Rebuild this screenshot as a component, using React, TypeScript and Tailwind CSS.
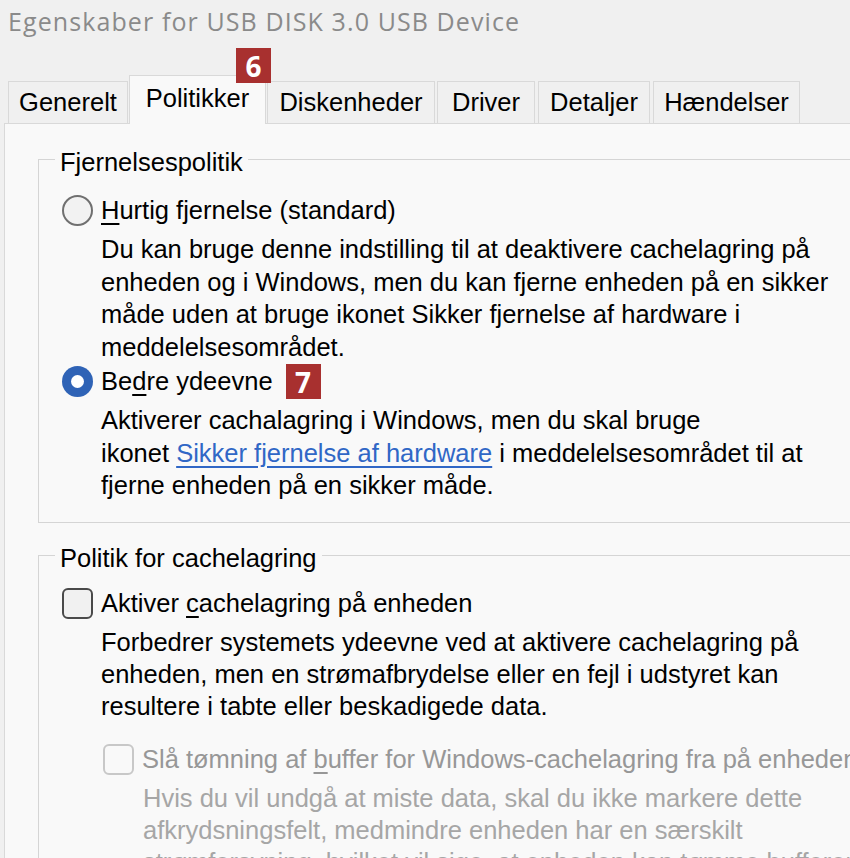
import React from "react";

const BORDER = "border-[#d5d5d5]";

function GroupHeader({ title }: { title: string }) {
  return (
    <div className="flex h-[30px]">
      <div className="w-[17px] flex flex-col shrink-0">
        <div className="h-[15px]" />
        <div className={`flex-1 border-l border-t ${BORDER}`} />
      </div>
      <div className="px-[5px] pt-[3px] leading-[30px] whitespace-nowrap">{title}</div>
      <div className="flex-1 flex flex-col">
        <div className="h-[15px]" />
        <div className={`flex-1 border-t border-r ${BORDER}`} />
      </div>
    </div>
  );
}

function Radio({ checked }: { checked?: boolean }) {
  if (checked) {
    return (
      <div className="w-[31px] h-[31px] rounded-full bg-[#2f63b6] flex items-center justify-center shrink-0">
        <div className="w-[13px] h-[13px] rounded-full bg-white" />
      </div>
    );
  }
  return <div className="w-[31px] h-[31px] rounded-full border-[2px] border-[#707070] bg-[#f2f2f2] shrink-0" />;
}

function Tab({ label, w, ml, selected }: { label: string; w: string; ml: string; selected?: boolean }) {
  if (selected) {
    return (
      <div
        className={`${w} ${ml} h-[49px] -mb-px relative z-10 bg-[#f9f9f9] border border-b-0 border-[#d9d9d9] flex justify-center pt-[6px] leading-[33px] shrink-0`}
      >
        {label}
      </div>
    );
  }
  return (
    <div
      className={`${w} ${ml} h-[42px] bg-[#f0f0f0] border border-b-0 border-[#d9d9d9] flex items-center justify-center leading-[33px] shrink-0`}
    >
      {label}
    </div>
  );
}

export default function App() {
  return (
    <div
      className="relative w-[850px] h-[858px] overflow-hidden bg-[#f0f0f0] text-black text-[25.5px]"
      style={{ fontFamily: '"Liberation Sans", Arial, sans-serif' }}
    >
      {/* Title */}
      <div
        className="h-[44px] flex items-center pl-[8px] text-[#8a8a8a] text-[25px] tracking-[1.1px] whitespace-nowrap"
        style={{ fontFamily: '"Open Sans", "Liberation Sans", sans-serif' }}
      >
        Egenskaber for USB DISK 3.0 USB Device
      </div>

      {/* Tabs */}
      <div className="h-[79px] flex items-end pl-[8px] whitespace-nowrap">
        <Tab label="Generelt" w="w-[120px]" ml="ml-0" />
        <Tab label="Politikker" w="w-[137px]" ml="ml-[1px]" selected />
        <Tab label="Diskenheder" w="w-[168px]" ml="ml-[1px]" />
        <Tab label="Driver" w="w-[98px]" ml="ml-[2px]" />
        <Tab label="Detaljer" w="w-[112px]" ml="ml-[3px]" />
        <Tab label="Hændelser" w="w-[147px]" ml="ml-[3px]" />
      </div>

      {/* Panel */}
      <div className="ml-[4px] h-[800px] border-l border-t border-[#d9d9d9] bg-[#f9f9f9]">
        {/* Group 1 */}
        <div className="ml-[33px] mt-[20px] w-[860px]">
          <GroupHeader title="Fjernelsespolitik" />
          <div className={`border-l border-r border-b ${BORDER} pl-[23px] pt-[20px] pb-[20px]`}>
            <div className="flex items-center gap-[8px] h-[33px] whitespace-nowrap">
              <Radio />
              <span>
                <span className="underline underline-offset-[4px]">H</span>urtig fjernelse (standard)
              </span>
            </div>
            <div className="mt-[6px] pl-[39px] leading-[32.5px] whitespace-nowrap">
              <div>Du kan bruge denne indstilling til at deaktivere cachelagring på</div>
              <div>enheden og i Windows, men du kan fjerne enheden på en sikker</div>
              <div>måde uden at bruge ikonet Sikker fjernelse af hardware i</div>
              <div>meddelelsesområdet.</div>
            </div>
            <div className="mt-[2px] flex items-center gap-[8px] h-[33px] whitespace-nowrap">
              <Radio checked />
              <span>
                Be<span className="underline underline-offset-[4px]">d</span>re ydeevne
              </span>
              <span
                className="ml-[5px] w-[35px] h-[35px] bg-[#a8302f] text-white font-bold text-[28px] flex items-center justify-center"
                style={{ fontFamily: '"Open Sans", "Liberation Sans", sans-serif' }}
              >
                7
              </span>
            </div>
            <div className="mt-[6px] pl-[39px] leading-[32.5px] whitespace-nowrap">
              <div>Aktiverer cachalagring i Windows, men du skal bruge</div>
              <div>
                ikonet{" "}
                <span className="text-[#3067c6] underline underline-offset-[4px] decoration-[#3067c6]">
                  Sikker fjernelse af hardware
                </span>{" "}
                i meddelelsesområdet til at
              </div>
              <div>fjerne enheden på en sikker måde.</div>
            </div>
          </div>
        </div>

        {/* Group 2 */}
        <div className="ml-[33px] mt-[17px] w-[860px]">
          <GroupHeader title="Politik for cachelagring" />
          <div className={`border-l border-r ${BORDER} pl-[23px] pt-[17px] pb-[40px]`}>
            <div className="flex items-center gap-[8px] h-[33px] whitespace-nowrap">
              <div className="w-[31px] h-[31px] rounded-[6px] border-[2px] border-[#4a4a4a] bg-[#f1f1f1] shrink-0" />
              <span>
                Aktiver <span className="underline underline-offset-[4px]">c</span>achelagring på enheden
              </span>
            </div>
            <div className="mt-[6px] pl-[39px] leading-[32px] whitespace-nowrap">
              <div>Forbedrer systemets ydeevne ved at aktivere cachelagring på</div>
              <div>enheden, men en strømafbrydelse eller en fejl i udstyret kan</div>
              <div>resultere i tabte eller beskadigede data.</div>
            </div>
            <div className="ml-[41px] mt-[21px] flex items-center gap-[8px] h-[33px] whitespace-nowrap text-[#979797]">
              <div className="w-[31px] h-[31px] rounded-[6px] border-[2px] border-[#c8c8c8] shrink-0" />
              <span>
                Slå tømning af <span className="underline underline-offset-[4px]">b</span>uffer for
                Windows-cachelagring fra på enheden
              </span>
            </div>
            <div className="mt-[6px] pl-[81px] leading-[32px] whitespace-nowrap text-[#a6a6a6]">
              <div>Hvis du vil undgå at miste data, skal du ikke markere dette</div>
              <div>afkrydsningsfelt, medmindre enheden har en særskilt</div>
              <div>strømforsyning, hvilket vil sige, at enheden kan tømme bufferen</div>
            </div>
          </div>
        </div>
      </div>

      {/* Badge 6 */}
      <div
        className="absolute left-[236px] top-[48px] z-20 w-[35px] h-[35px] bg-[#a8302f] text-white font-bold text-[28px] flex items-center justify-center"
        style={{ fontFamily: '"Open Sans", "Liberation Sans", sans-serif' }}
      >
        6
      </div>
    </div>
  );
}
